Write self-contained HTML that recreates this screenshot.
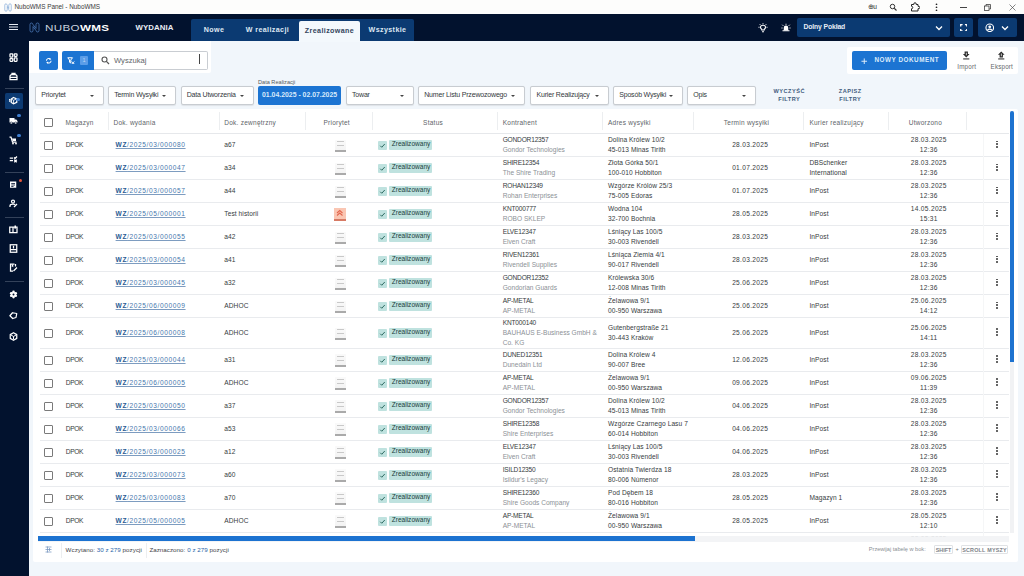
<!DOCTYPE html>
<html><head><meta charset="utf-8"><style>
*{margin:0;padding:0;box-sizing:border-box}
html,body{width:1024px;height:576px;overflow:hidden;background:#f1f6fb;font-family:"Liberation Sans",sans-serif;position:relative}
.abs{position:absolute}
svg{display:block}
#title{position:absolute;left:0;top:0;width:1024px;height:14px;background:#fdfdfc}
#title .tt{position:absolute;left:14.5px;top:3.2px;font-size:6.4px;line-height:8px;color:#3a3a3a;letter-spacing:0}
#hdr{position:absolute;left:0;top:14px;width:1024px;height:27.4px;background:#02122e}
#side{position:absolute;left:0;top:41px;width:29px;height:535px;background:#02122e}
.sico{position:absolute;left:9.1px}
.sact{position:absolute;left:4.8px;width:18.7px;height:16px;background:#0c3a72;border-radius:1.5px}
.sdot{position:absolute;width:3.8px;height:3.8px;border-radius:50%}
.ssep{position:absolute;left:5px;width:19px;height:1px;background:#34425a}
.tabs{position:absolute;left:190.5px;top:19px;width:223.5px;height:22.4px;background:#0b3a72;border-radius:2px 2px 0 0}
.tab{position:absolute;top:0;height:23px;font-size:7.1px;font-weight:bold;color:#dfe8f3;line-height:22px;text-align:center;letter-spacing:0.4px}
.tab.act{top:2px;height:21px;background:#f3f8fc;color:#34455c;line-height:20px;border-radius:2px 2px 0 0}
.t{position:absolute;white-space:nowrap;font-size:6.6px;line-height:10px;transform:translateY(-50%)}
.c1{color:#363b40;letter-spacing:0.08px}
.nar{letter-spacing:-0.35px}
.nar2{letter-spacing:-0.2px}
.dt{letter-spacing:0.3px}
.c2{color:#8c9196}
.lnk{color:#4677ad;text-decoration:underline;text-decoration-color:#7d9cc0;text-decoration-thickness:0.7px;text-underline-offset:0.5px;letter-spacing:0.6px}
.lnk b{font-weight:bold;color:#2a5a92}
.ctr{text-align:center}
.sep{position:absolute;left:39.5px;width:969.2px;height:1px;background:#e9ebee}
.cb{position:absolute;width:9px;height:9px;border:1.1px solid #7a7a7a;border-radius:1px;background:#fff}
.pril{position:absolute;width:11.5px;height:12.4px;background:linear-gradient(#fafafa,#f2f2f2)}
.pril i{position:absolute;left:2px;width:7.5px;height:0.9px;background:#c9c9c9}
.pril b{position:absolute;left:0;top:10.8px;width:11.5px;height:1.6px;background:#aaaaaa}
.prih{position:absolute;width:11.5px;height:12.8px;background:#fac6b3}
.prih svg{position:absolute;left:0;top:0.5px}
.prih:after{content:"";position:absolute;left:0;bottom:0;width:11.5px;height:1.8px;background:#d77a64}
.chk{position:absolute;width:8.8px;height:9px;background:#bfe2df;border-radius:1px}
.chk svg{position:absolute;left:0;top:0}
.chip{position:absolute;height:9.6px;width:43.4px;padding:0 0 0 2.6px;background:#bfe2df;color:#1a3e3a;font-size:6.5px;line-height:7.8px;border-radius:1px;letter-spacing:0.03px;white-space:nowrap}
.keb{position:absolute;width:2px;height:9px}
.keb i{display:block;width:1.6px;height:1.6px;background:#474747;border-radius:50%;margin-bottom:1.35px}
.hd{position:absolute;top:121.8px;transform:translateY(-50%);font-size:6.5px;color:#606469;white-space:nowrap;letter-spacing:0.25px}
.hsep{position:absolute;top:112px;width:1px;height:18px;background:#eceef0}
.fbox{position:absolute;top:85.5px;height:19.2px;background:#fff;border:1px solid #c8ccd1;border-radius:2px;box-shadow:0 0.5px 1px rgba(0,0,0,0.08)}
.fbox span{position:absolute;left:5.2px;top:7.9px;transform:translateY(-50%);font-size:7px;color:#33383d;white-space:nowrap;letter-spacing:-0.18px}
.fbox i{position:absolute;right:9px;top:8.3px;width:0;height:0;border-left:2.8px solid transparent;border-right:2.8px solid transparent;border-top:2.8px solid #444}
</style></head><body>
<div id="title">
 <svg class="abs" style="left:3.8px;top:2.8px" width="8" height="9" viewBox="0 0 16 18"><path d="M4 1.5 Q1.5 1.5 1.5 4.5 V13.5 Q1.5 16.5 4 16.5 Q6.5 16.5 6.5 13.5 V7 L9.5 13.5 Q10.5 16.5 12 16.5 Q14.5 16.5 14.5 13.5 V4.5 Q14.5 1.5 12 1.5 Q9.5 1.5 9.5 4.5 V11 L6.5 4.5 Q5.5 1.5 4 1.5 Z" stroke="#86acd8" stroke-width="1.4" fill="none"/></svg>
 <div class="tt">NuboWMS Panel - NuboWMS</div>
 <div class="abs" style="left:867.5px;top:3.2px;font-size:6.6px;line-height:8px;color:#333;letter-spacing:-0.3px">⊕u</div>
 <svg class="abs" style="left:889px;top:3px" width="9" height="9" viewBox="0 0 18 18"><circle cx="7" cy="7" r="4.5" stroke="#333" stroke-width="2" fill="none"/><path d="M10.5 10.5 L15 15" stroke="#333" stroke-width="2.2"/></svg>
 <svg class="abs" style="left:910px;top:2.2px" width="10" height="10" viewBox="0 0 20 20"><path d="M3 5 H7.5 Q7 1.5 10 1.5 Q13 1.5 12.5 5 H16 V8.5 Q19.5 8 19.5 11 Q19.5 14 16 13.5 V18 H3 V13.5 Q5.5 13.5 5.5 11 Q5.5 8.5 3 8.5 Z" stroke="#222" stroke-width="2" fill="none" stroke-linejoin="round"/></svg>
 <svg class="abs" style="left:934.8px;top:3px" width="3" height="9" viewBox="0 0 6 18"><circle cx="3" cy="2.5" r="1.7" fill="#222"/><circle cx="3" cy="8.5" r="1.7" fill="#222"/><circle cx="3" cy="14.5" r="1.7" fill="#222"/></svg>
 <div class="abs" style="left:959.6px;top:6.6px;width:7px;height:0.8px;background:#444"></div>
 <svg class="abs" style="left:984px;top:3.5px" width="7" height="7" viewBox="0 0 14 14"><rect x="1" y="4" width="9" height="9" stroke="#333" stroke-width="1.5" fill="none"/><path d="M4 4 V1 H13 V10 H10" stroke="#333" stroke-width="1.5" fill="none"/></svg>
 <svg class="abs" style="left:1008.5px;top:3.5px" width="7" height="7" viewBox="0 0 14 14"><path d="M1 1 L13 13 M13 1 L1 13" stroke="#444" stroke-width="1.3"/></svg>
</div>
<div id="hdr">
 <div class="abs" style="left:9px;top:10px;width:9.3px;height:1.1px;background:#e8edf5;box-shadow:0 2.5px 0 #e8edf5,0 5px 0 #e8edf5"></div>
 <svg class="abs" style="left:28.5px;top:8px" width="11" height="11" viewBox="0 0 22 22"><path d="M5 2 Q2 2 2 5 V17 Q2 20 5 20 Q8 20 8 17 V9 L14 17 Q15 20 17 20 Q20 20 20 17 V5 Q20 2 17 2 Q14 2 14 5 V13 L8 5 Q7 2 5 2 Z" stroke="#4f7fc0" stroke-width="1.5" fill="none"/></svg>
 <div class="abs" style="left:45px;top:8.5px;font-size:8.3px;line-height:10px;color:#c9d2de;letter-spacing:0.25px;white-space:nowrap;transform:scaleX(1.4);transform-origin:0 0">NUBO<b style="color:#fff">WMS</b></div>
 <div class="abs" style="left:135.5px;top:9px;font-size:7.8px;line-height:9px;color:#e9eef5;font-weight:bold;letter-spacing:0.1px">WYDANIA</div>
</div>
<div class="tabs">
 <div class="tab" style="left:0;width:47px">Nowe</div>
 <div class="tab" style="left:46px;width:62px">W realizacji</div>
 <div class="tab act" style="left:108.5px;width:61px">Zrealizowane</div>
 <div class="tab" style="left:170px;width:54px">Wszystkie</div>
</div>
<div class="abs" style="left:757.5px;top:22.5px;width:10px;height:10px"><svg width="10" height="10" viewBox="0 0 20 20"><path d="M7.5 14 V12.5 Q5 11 5 8.5 Q5 4.5 10 4.5 Q15 4.5 15 8.5 Q15 11 12.5 12.5 V14 Z" stroke="#fff" stroke-width="2.2" fill="none"/><path d="M8 17.5 H12 M10 0.5 V2.5 M3.5 2.5 L5 4 M16.5 2.5 L15 4 M1 8.5 H3 M17 8.5 H19" stroke="#fff" stroke-width="2"/></svg></div>
<div class="abs" style="left:780.5px;top:22.5px;width:10px;height:10px"><svg width="10" height="10" viewBox="0 0 20 20"><path d="M5.5 15 V9.5 Q5.5 5 10 5 Q14.5 5 14.5 9.5 V15 Z" fill="#fff"/><path d="M3 15.5 H17 M10 1.5 V3.5 M2.5 3.5 L4.5 5.5 M17.5 3.5 L15.5 5.5 M1 10 H3 M17 10 H19" stroke="#fff" stroke-width="2"/></svg></div>
<div class="abs" style="left:797px;top:18px;width:153px;height:19px;background:#0b3a72;border-radius:2px">
 <div class="abs" style="left:6.5px;top:5.2px;font-size:6.8px;font-weight:bold;color:#e6edf6;white-space:nowrap;letter-spacing:-0.12px">Dolny Pokład</div>
 <svg class="abs" style="left:138px;top:6.5px" width="8" height="6" viewBox="0 0 16 12"><path d="M2 3 L8 9 L14 3" stroke="#fff" stroke-width="2.6" fill="none"/></svg>
</div>
<div class="abs" style="left:954px;top:18px;width:19px;height:19px;background:#0b3a72;border-radius:2px">
 <svg class="abs" style="left:5.8px;top:5.8px" width="7.5" height="7.5" viewBox="0 0 16 16"><path d="M1.5 5.5 V1.5 H5.5 M10.5 1.5 H14.5 V5.5 M14.5 10.5 V14.5 H10.5 M5.5 14.5 H1.5 V10.5" stroke="#fff" stroke-width="2.8" fill="none"/></svg>
</div>
<div class="abs" style="left:978px;top:18px;width:39px;height:19px;background:#0b3a72;border-radius:2px">
 <svg class="abs" style="left:6.8px;top:4.8px" width="9.5" height="9.5" viewBox="0 0 20 20"><circle cx="10" cy="10" r="8" stroke="#fff" stroke-width="2.3" fill="none"/><circle cx="10" cy="8" r="3" fill="#fff"/><path d="M4.5 15.5 Q10 10.5 15.5 15.5" stroke="#fff" stroke-width="2.3" fill="none"/></svg>
 <svg class="abs" style="left:23px;top:6.5px" width="8" height="6" viewBox="0 0 16 12"><path d="M2 3 L8 9 L14 3" stroke="#fff" stroke-width="2.6" fill="none"/></svg>
</div>
<div id="side"><div class="ssep" style="top:47.3px"></div><div class="ssep" style="top:130.8px"></div><div class="ssep" style="top:175.6px"></div><div class="ssep" style="top:240.0px"></div></div>
<svg class="sico" style="top:52.5px" width="9" height="9" viewBox="0 0 18 18"><rect x="2" y="1.5" width="5.5" height="6.5" rx="1" stroke="#fff" fill="none" stroke-width="2.5"/><rect x="10.5" y="1.5" width="5.5" height="5" rx="1" stroke="#fff" fill="none" stroke-width="2.5"/><rect x="2" y="11" width="5.5" height="5.5" rx="1" stroke="#fff" fill="none" stroke-width="2.5"/><rect x="10.5" y="9.5" width="5.5" height="7" rx="1" stroke="#fff" fill="none" stroke-width="2.5"/></svg><svg class="sico" style="top:72.0px" width="9" height="9" viewBox="0 0 18 18"><path d="M2 9 Q2 5 6 5 H12 Q16 5 16 9 V15 H2 Z" stroke="#fff" fill="none" stroke-width="2.5"/><path d="M6 5 V2.5 H12 V5 M2 10.5 H16" stroke="#fff" fill="none" stroke-width="2.5"/></svg><div class="sact" style="top:92.8px"></div><svg class="sico" style="top:96.3px" width="9" height="9" viewBox="0 0 18 18"><path d="M9 3 L15.5 6 V12.5 L9 15.5 L4.5 13 V6 Z" stroke="#fff" fill="none" stroke-width="2.5"/><path d="M4.5 6 L9 8.5 L15.5 6 M9 8.5 V15.5" stroke="#fff" stroke-width="1.6" fill="none"/><path d="M0 7 H3 M0 10 H3" stroke="#fff" fill="none" stroke-width="2.5"/></svg><div class="sdot" style="left:16.4px;top:97.5px;background:#3f7fd0"></div><svg class="sico" style="top:115.8px" width="9" height="9" viewBox="0 0 18 18"><path d="M1 4 H11 V13 H1 Z M11 7 H14.5 L17 10 V13 H11 Z" fill="#fff"/><circle cx="4.5" cy="14" r="2.2" fill="#fff" stroke="#02122f" stroke-width="1"/><circle cx="13.5" cy="14" r="2.2" fill="#fff" stroke="#02122f" stroke-width="1"/></svg><div class="sdot" style="left:16.9px;top:113.5px;background:#3f7fd0"></div><svg class="sico" style="top:136.0px" width="9" height="9" viewBox="0 0 18 18"><path d="M1 2 H4 L7 12 H15" stroke="#fff" fill="none" stroke-width="2.5"/><path d="M6 5 H14 V10 H7.5 Z" fill="#fff"/><circle cx="8" cy="15" r="1.8" fill="#fff"/><circle cx="14" cy="15" r="1.8" fill="#fff"/></svg><div class="sdot" style="left:16.9px;top:133.7px;background:#3f7fd0"></div><svg class="sico" style="top:154.8px" width="9" height="9" viewBox="0 0 18 18"><path d="M1.5 6 H8 M1.5 11 H8 M10 5 L12 7 L16 3 M10.5 9.5 L15.5 14.5 M15.5 9.5 L10.5 14.5" stroke="#fff" fill="none" stroke-width="2.5"/></svg><svg class="sico" style="top:179.8px" width="9" height="9" viewBox="0 0 18 18"><rect x="2" y="3" width="12.5" height="12.5" fill="#fff"/><path d="M4.5 7 H12 M4.5 10 H12 M4.5 13 H9" stroke="#02122e" stroke-width="1.6"/></svg><div class="sdot" style="left:18.7px;top:178.5px;background:#e3573c"></div><svg class="sico" style="top:199.3px" width="9" height="9" viewBox="0 0 18 18"><circle cx="8" cy="5" r="3" stroke="#fff" fill="none" stroke-width="2.5"/><path d="M2 16 V13.5 Q2 10 8 10 Q11 10 12.5 11" stroke="#fff" fill="none" stroke-width="2.5"/><path d="M10 16 L16 10" stroke="#fff" stroke-width="2.4"/></svg><svg class="sico" style="top:224.9px" width="9" height="9" viewBox="0 0 18 18"><path d="M1.5 4 H8 V15 H1.5 Z M8 4 H16 V15 H8" stroke="#fff" fill="none" stroke-width="2.5"/><path d="M11 1 V8 L12.5 6.5 L14 8 V1 Z" fill="#fff"/></svg><svg class="sico" style="top:243.9px" width="9" height="9" viewBox="0 0 18 18"><rect x="2.5" y="1.5" width="13" height="15" stroke="#fff" fill="none" stroke-width="2.5"/><path d="M2.5 11 H15.5 M9 3.5 V9" stroke="#fff" fill="none" stroke-width="2.5"/></svg><svg class="sico" style="top:263.4px" width="9" height="9" viewBox="0 0 18 18"><path d="M11 2 H3 V16 H8" stroke="#fff" fill="none" stroke-width="2.5"/><path d="M5.5 3 V8.5 L7 7.2 L8.5 8.5 V3" fill="#fff"/><path d="M13 2 V7 M9 16 L16 9" stroke="#fff" fill="none" stroke-width="2.5"/></svg><svg class="sico" style="top:289.9px" width="9" height="9" viewBox="0 0 18 18"><g fill="#fff"><circle cx="9" cy="3.8" r="2.6"/><circle cx="13.5" cy="6.4" r="2.6"/><circle cx="13.5" cy="11.6" r="2.6"/><circle cx="9" cy="14.2" r="2.6"/><circle cx="4.5" cy="11.6" r="2.6"/><circle cx="4.5" cy="6.4" r="2.6"/><circle cx="9" cy="9" r="5"/></g><circle cx="9" cy="9" r="2" fill="#02122e"/></svg><svg class="sico" style="top:311.2px" width="9" height="9" viewBox="0 0 18 18"><path d="M1.8 9.5 L7 3.5 L15.5 5 L14 13 L7.5 15 Z" stroke="#fff" fill="none" stroke-width="2.5" stroke-linejoin="round"/></svg><svg class="sico" style="top:331.7px" width="9" height="9" viewBox="0 0 18 18"><path d="M9 1.5 L15.5 5.2 V12.8 L9 16.5 L2.5 12.8 V5.2 Z" stroke="#fff" fill="none" stroke-width="2.5" stroke-linejoin="round"/><path d="M9 9 V15 M9 9 L14 6 M9 9 L4 6" stroke="#fff" stroke-width="2"/></svg>
<!-- toolbar left -->
<div class="abs" style="left:29px;top:41.4px;width:181.5px;height:32.1px;background:#fff;border-radius:0 0 2px 0"></div>
<div class="abs" style="left:38.5px;top:51.3px;width:19px;height:19px;background:#1c74d2;border-radius:2px">
 <svg class="abs" style="left:6px;top:5.7px" width="7.5" height="7.5" viewBox="0 0 16 16"><path d="M3 8 A5 5 0 0 1 11.5 4.5 M13 8 A5 5 0 0 1 4.5 11.5" stroke="#fff" stroke-width="2.2" fill="none"/><path d="M10 1.5 L13.5 5.5 L9 6 Z M6 14.5 L2.5 10.5 L7 10 Z" fill="#fff"/></svg>
</div>
<div class="abs" style="left:61.5px;top:51.3px;width:33px;height:19px;background:#1c74d2;border-radius:2px 0 0 2px">
 <svg class="abs" style="left:5.8px;top:5.3px" width="8" height="7.5" viewBox="0 0 16 15"><path d="M1.5 1.5 H11 L7.5 6 V12 L5 10.5 V6 Z" stroke="#fff" stroke-width="2" fill="none" stroke-linejoin="round"/><path d="M9.5 9 L14.5 14 M14.5 9 L9.5 14" stroke="#fff" stroke-width="2"/></svg>
 <div class="abs" style="left:18.4px;top:5.1px;width:8.5px;height:8.2px;background:#5b9de8;border-radius:1px;color:#b9d6f6;font-size:5.5px;line-height:8.2px;text-align:center">1</div>
</div>
<div class="abs" style="left:93.8px;top:51.3px;width:113.9px;height:19px;background:#fff;border:1px solid #c9cdd2;border-left:none;border-radius:0 2px 2px 0">
 <svg class="abs" style="left:7.4px;top:3.6px" width="9" height="9" viewBox="0 0 18 18"><circle cx="7" cy="7" r="5" stroke="#555" stroke-width="2.2" fill="none"/><path d="M10.8 10.8 L16 16" stroke="#555" stroke-width="2.5"/></svg>
 <div class="abs" style="left:20.2px;top:3.6px;font-size:7.6px;color:#606468">Wyszukaj</div>
 <div class="abs" style="left:105.2px;top:1.7px;width:1px;height:10px;background:#444"></div>
</div>
<!-- toolbar right -->
<div class="abs" style="left:847px;top:47.4px;width:171px;height:27px;background:#fff;border-radius:2px"></div>
<div class="abs" style="left:852.2px;top:51.3px;width:94.8px;height:18.6px;background:#1c74d2;border-radius:2px">
 <svg class="abs" style="left:9.3px;top:6.3px" width="6.5" height="6.5" viewBox="0 0 14 14"><path d="M7 1 V13 M1 7 H13" stroke="#e6f0fb" stroke-width="2"/></svg>
 <div class="abs" style="left:22.3px;top:5.2px;font-size:6.3px;line-height:8px;font-weight:bold;color:#dcecfc;letter-spacing:0.55px;white-space:nowrap">NOWY DOKUMENT</div>
</div>
<svg class="abs" style="left:962.3px;top:51px" width="8.5" height="8.5" viewBox="0 0 18 18"><path d="M5.5 1 H12.5 V6.5 H16 L9 13.5 L2 6.5 H5.5 Z" fill="#2a2a2a"/><path d="M8.2 3.5 H9.8 V9 H8.2 Z" fill="#fff"/><path d="M2.5 16.8 H15.5" stroke="#2a2a2a" stroke-width="2.2"/></svg>
<div class="abs" style="left:957.3px;top:63px;font-size:6.3px;color:#66696d;letter-spacing:0.15px">Import</div>
<svg class="abs" style="left:996.8px;top:51px" width="8.5" height="8.5" viewBox="0 0 18 18"><path d="M5.5 13.5 H12.5 V8 H16 L9 1 L2 8 H5.5 Z" fill="#2a2a2a"/><path d="M8.2 5.5 H9.8 V11 H8.2 Z" fill="#fff"/><path d="M2.5 16.8 H15.5" stroke="#2a2a2a" stroke-width="2.2"/></svg>
<div class="abs" style="left:990.6px;top:63px;font-size:6.3px;color:#66696d;letter-spacing:0.15px">Eksport</div>
<!-- filters -->
<div class="fbox" style="left:35px;width:68.6px"><span>Priorytet</span><i></i></div>
<div class="fbox" style="left:108px;width:68.4px"><span>Termin Wysyłki</span><i></i></div>
<div class="fbox" style="left:180.5px;width:73.1px"><span>Data Utworzenia</span><i></i></div>
<div class="abs" style="left:258px;top:79px;font-size:5.6px;color:#555a60;white-space:nowrap">Data Realizacji</div>
<div class="abs" style="left:258px;top:86px;width:83px;height:18.7px;background:#1c74d2;border-radius:2px"><div class="abs" style="left:4px;top:5.4px;font-size:6.9px;line-height:8px;color:#d8eafb;font-weight:bold;white-space:nowrap;letter-spacing:0">01.04.2025 - 02.07.2025</div></div>
<div class="fbox" style="left:345.8px;width:68.7px"><span>Towar</span><i></i></div>
<div class="fbox" style="left:418px;width:107.3px"><span>Numer Listu Przewozowego</span><i></i></div>
<div class="fbox" style="left:530.3px;width:78.7px"><span>Kurier Realizujący</span><i></i></div>
<div class="fbox" style="left:613px;width:69.5px"><span>Sposób Wysyłki</span><i></i></div>
<div class="fbox" style="left:687px;width:69.3px"><span>Opis</span><i></i></div>
<div class="abs" style="left:768.3px;top:88.2px;width:42px;text-align:center;font-size:5.6px;line-height:7.4px;font-weight:bold;color:#3f5b7d;letter-spacing:0.5px">WYCZYŚĆ<br>FILTRY</div>
<div class="abs" style="left:829.3px;top:88.2px;width:42px;text-align:center;font-size:5.6px;line-height:7.4px;font-weight:bold;color:#3f5b7d;letter-spacing:0.5px">ZAPISZ<br>FILTRY</div>
<!-- table card -->
<div class="abs" style="left:33px;top:108.6px;width:984.5px;height:453.8px;background:#fff;border-radius:2px;overflow:hidden">
</div>
<div class="abs" style="left:0;top:0;width:1024px;height:536.5px;overflow:hidden">
<div class="sep" style="top:155.70px"></div><div class="cb" style="left:44px;top:140.70px"></div><div class="t c1 nar" style="left:65.80px;top:145.20px;">DPOK</div><div class="t lnk" style="left:115.60px;top:145.20px;"><b>WZ</b>/2025/03/000080</div><div class="t c1" style="left:224.30px;top:145.20px;">a67</div><div class="pril" style="left:334.6px;top:139.60px"><i style="top:1.9px"></i><i style="top:5.3px"></i><b></b></div><div class="chk" style="left:377.9px;top:140.70px"><svg width="9" height="9" viewBox="0 0 18 18"><path d="M4.5 9.5 L7.5 12.5 L13.5 6" stroke="#2e6b62" stroke-width="2" fill="none"/></svg></div><div class="chip" style="left:389.1px;top:140.40px">Zrealizowany</div><div class="t c1 nar2" style="left:502.70px;top:140.15px;">GONDOR12357</div><div class="t c2" style="left:502.70px;top:150.25px;">Gondor Technologies</div><div class="t c1" style="left:608.00px;top:140.15px;">Dolina Królew 10/2</div><div class="t c1" style="left:608.00px;top:150.25px;">45-013 Minas Tirith</div><div class="t c1 ctr dt" style="left:695px;width:110.3px;top:145.20px">28.03.2025</div><div class="t c1" style="left:809.40px;top:145.20px;">InPost</div><div class="t c1 ctr dt" style="left:889.8px;width:78px;top:140.15px">28.03.2025</div><div class="t c1 ctr dt" style="left:889.8px;width:78px;top:150.25px">12:36</div><div class="keb" style="left:996.2px;top:140.50px"><i></i><i></i><i></i></div>
<div class="sep" style="top:178.70px"></div><div class="cb" style="left:44px;top:163.70px"></div><div class="t c1 nar" style="left:65.80px;top:168.20px;">DPOK</div><div class="t lnk" style="left:115.60px;top:168.20px;"><b>WZ</b>/2025/03/000047</div><div class="t c1" style="left:224.30px;top:168.20px;">a34</div><div class="pril" style="left:334.6px;top:162.60px"><i style="top:1.9px"></i><i style="top:5.3px"></i><b></b></div><div class="chk" style="left:377.9px;top:163.70px"><svg width="9" height="9" viewBox="0 0 18 18"><path d="M4.5 9.5 L7.5 12.5 L13.5 6" stroke="#2e6b62" stroke-width="2" fill="none"/></svg></div><div class="chip" style="left:389.1px;top:163.40px">Zrealizowany</div><div class="t c1 nar2" style="left:502.70px;top:163.15px;">SHIRE12354</div><div class="t c2" style="left:502.70px;top:173.25px;">The Shire Trading</div><div class="t c1" style="left:608.00px;top:163.15px;">Złota Górka 50/1</div><div class="t c1" style="left:608.00px;top:173.25px;">100-010 Hobbiton</div><div class="t c1 ctr dt" style="left:695px;width:110.3px;top:168.20px">01.07.2025</div><div class="t c1" style="left:809.40px;top:163.15px;">DBSchenker</div><div class="t c1" style="left:809.40px;top:173.25px;">International</div><div class="t c1 ctr dt" style="left:889.8px;width:78px;top:163.15px">28.03.2025</div><div class="t c1 ctr dt" style="left:889.8px;width:78px;top:173.25px">12:36</div><div class="keb" style="left:996.2px;top:163.50px"><i></i><i></i><i></i></div>
<div class="sep" style="top:201.70px"></div><div class="cb" style="left:44px;top:186.70px"></div><div class="t c1 nar" style="left:65.80px;top:191.20px;">DPOK</div><div class="t lnk" style="left:115.60px;top:191.20px;"><b>WZ</b>/2025/03/000057</div><div class="t c1" style="left:224.30px;top:191.20px;">a44</div><div class="pril" style="left:334.6px;top:185.60px"><i style="top:1.9px"></i><i style="top:5.3px"></i><b></b></div><div class="chk" style="left:377.9px;top:186.70px"><svg width="9" height="9" viewBox="0 0 18 18"><path d="M4.5 9.5 L7.5 12.5 L13.5 6" stroke="#2e6b62" stroke-width="2" fill="none"/></svg></div><div class="chip" style="left:389.1px;top:186.40px">Zrealizowany</div><div class="t c1 nar2" style="left:502.70px;top:186.15px;">ROHAN12349</div><div class="t c2" style="left:502.70px;top:196.25px;">Rohan Enterprises</div><div class="t c1" style="left:608.00px;top:186.15px;">Wzgórze Królów 25/3</div><div class="t c1" style="left:608.00px;top:196.25px;">75-005 Edoras</div><div class="t c1 ctr dt" style="left:695px;width:110.3px;top:191.20px">01.07.2025</div><div class="t c1" style="left:809.40px;top:191.20px;">InPost</div><div class="t c1 ctr dt" style="left:889.8px;width:78px;top:186.15px">28.03.2025</div><div class="t c1 ctr dt" style="left:889.8px;width:78px;top:196.25px">12:36</div><div class="keb" style="left:996.2px;top:186.50px"><i></i><i></i><i></i></div>
<div class="sep" style="top:224.70px"></div><div class="cb" style="left:44px;top:209.70px"></div><div class="t c1 nar" style="left:65.80px;top:214.20px;">DPOK</div><div class="t lnk" style="left:115.60px;top:214.20px;"><b>WZ</b>/2025/05/000001</div><div class="t c1" style="left:224.30px;top:214.20px;">Test historii</div><div class="prih" style="left:334.3px;top:207.80px"><svg width="11.5" height="11" viewBox="0 0 23 22"><path d="M6 10 L11.5 5 L17 10 M6 15 L11.5 10 L17 15" stroke="#e2654c" stroke-width="2.1" fill="none"/></svg></div><div class="chk" style="left:377.9px;top:209.70px"><svg width="9" height="9" viewBox="0 0 18 18"><path d="M4.5 9.5 L7.5 12.5 L13.5 6" stroke="#2e6b62" stroke-width="2" fill="none"/></svg></div><div class="chip" style="left:389.1px;top:209.40px">Zrealizowany</div><div class="t c1 nar2" style="left:502.70px;top:209.15px;">KNT000777</div><div class="t c2" style="left:502.70px;top:219.25px;">ROBO SKLEP</div><div class="t c1" style="left:608.00px;top:209.15px;">Wodna 104</div><div class="t c1" style="left:608.00px;top:219.25px;">32-700 Bochnia</div><div class="t c1 ctr dt" style="left:695px;width:110.3px;top:214.20px">28.05.2025</div><div class="t c1" style="left:809.40px;top:214.20px;">InPost</div><div class="t c1 ctr dt" style="left:889.8px;width:78px;top:209.15px">14.05.2025</div><div class="t c1 ctr dt" style="left:889.8px;width:78px;top:219.25px">15:31</div><div class="keb" style="left:996.2px;top:209.50px"><i></i><i></i><i></i></div>
<div class="sep" style="top:247.70px"></div><div class="cb" style="left:44px;top:232.70px"></div><div class="t c1 nar" style="left:65.80px;top:237.20px;">DPOK</div><div class="t lnk" style="left:115.60px;top:237.20px;"><b>WZ</b>/2025/03/000055</div><div class="t c1" style="left:224.30px;top:237.20px;">a42</div><div class="pril" style="left:334.6px;top:231.60px"><i style="top:1.9px"></i><i style="top:5.3px"></i><b></b></div><div class="chk" style="left:377.9px;top:232.70px"><svg width="9" height="9" viewBox="0 0 18 18"><path d="M4.5 9.5 L7.5 12.5 L13.5 6" stroke="#2e6b62" stroke-width="2" fill="none"/></svg></div><div class="chip" style="left:389.1px;top:232.40px">Zrealizowany</div><div class="t c1 nar2" style="left:502.70px;top:232.15px;">ELVE12347</div><div class="t c2" style="left:502.70px;top:242.25px;">Elven Craft</div><div class="t c1" style="left:608.00px;top:232.15px;">Lśniący Las 100/5</div><div class="t c1" style="left:608.00px;top:242.25px;">30-003 Rivendell</div><div class="t c1 ctr dt" style="left:695px;width:110.3px;top:237.20px">28.03.2025</div><div class="t c1" style="left:809.40px;top:237.20px;">InPost</div><div class="t c1 ctr dt" style="left:889.8px;width:78px;top:232.15px">28.03.2025</div><div class="t c1 ctr dt" style="left:889.8px;width:78px;top:242.25px">12:36</div><div class="keb" style="left:996.2px;top:232.50px"><i></i><i></i><i></i></div>
<div class="sep" style="top:270.70px"></div><div class="cb" style="left:44px;top:255.70px"></div><div class="t c1 nar" style="left:65.80px;top:260.20px;">DPOK</div><div class="t lnk" style="left:115.60px;top:260.20px;"><b>WZ</b>/2025/03/000054</div><div class="t c1" style="left:224.30px;top:260.20px;">a41</div><div class="pril" style="left:334.6px;top:254.60px"><i style="top:1.9px"></i><i style="top:5.3px"></i><b></b></div><div class="chk" style="left:377.9px;top:255.70px"><svg width="9" height="9" viewBox="0 0 18 18"><path d="M4.5 9.5 L7.5 12.5 L13.5 6" stroke="#2e6b62" stroke-width="2" fill="none"/></svg></div><div class="chip" style="left:389.1px;top:255.40px">Zrealizowany</div><div class="t c1 nar2" style="left:502.70px;top:255.15px;">RIVEN12361</div><div class="t c2" style="left:502.70px;top:265.25px;">Rivendell Supplies</div><div class="t c1" style="left:608.00px;top:255.15px;">Lśniąca Ziemia 4/1</div><div class="t c1" style="left:608.00px;top:265.25px;">90-017 Rivendell</div><div class="t c1 ctr dt" style="left:695px;width:110.3px;top:260.20px">28.03.2025</div><div class="t c1" style="left:809.40px;top:260.20px;">InPost</div><div class="t c1 ctr dt" style="left:889.8px;width:78px;top:255.15px">28.03.2025</div><div class="t c1 ctr dt" style="left:889.8px;width:78px;top:265.25px">12:36</div><div class="keb" style="left:996.2px;top:255.50px"><i></i><i></i><i></i></div>
<div class="sep" style="top:293.70px"></div><div class="cb" style="left:44px;top:278.70px"></div><div class="t c1 nar" style="left:65.80px;top:283.20px;">DPOK</div><div class="t lnk" style="left:115.60px;top:283.20px;"><b>WZ</b>/2025/03/000045</div><div class="t c1" style="left:224.30px;top:283.20px;">a32</div><div class="pril" style="left:334.6px;top:277.60px"><i style="top:1.9px"></i><i style="top:5.3px"></i><b></b></div><div class="chk" style="left:377.9px;top:278.70px"><svg width="9" height="9" viewBox="0 0 18 18"><path d="M4.5 9.5 L7.5 12.5 L13.5 6" stroke="#2e6b62" stroke-width="2" fill="none"/></svg></div><div class="chip" style="left:389.1px;top:278.40px">Zrealizowany</div><div class="t c1 nar2" style="left:502.70px;top:278.15px;">GONDOR12352</div><div class="t c2" style="left:502.70px;top:288.25px;">Gondorian Guards</div><div class="t c1" style="left:608.00px;top:278.15px;">Królewska 30/6</div><div class="t c1" style="left:608.00px;top:288.25px;">12-008 Minas Tirith</div><div class="t c1 ctr dt" style="left:695px;width:110.3px;top:283.20px">25.06.2025</div><div class="t c1" style="left:809.40px;top:283.20px;">InPost</div><div class="t c1 ctr dt" style="left:889.8px;width:78px;top:278.15px">28.03.2025</div><div class="t c1 ctr dt" style="left:889.8px;width:78px;top:288.25px">12:36</div><div class="keb" style="left:996.2px;top:278.50px"><i></i><i></i><i></i></div>
<div class="sep" style="top:316.70px"></div><div class="cb" style="left:44px;top:301.70px"></div><div class="t c1 nar" style="left:65.80px;top:306.20px;">DPOK</div><div class="t lnk" style="left:115.60px;top:306.20px;"><b>WZ</b>/2025/06/000009</div><div class="t c1" style="left:224.30px;top:306.20px;">ADHOC</div><div class="pril" style="left:334.6px;top:300.60px"><i style="top:1.9px"></i><i style="top:5.3px"></i><b></b></div><div class="chk" style="left:377.9px;top:301.70px"><svg width="9" height="9" viewBox="0 0 18 18"><path d="M4.5 9.5 L7.5 12.5 L13.5 6" stroke="#2e6b62" stroke-width="2" fill="none"/></svg></div><div class="chip" style="left:389.1px;top:301.40px">Zrealizowany</div><div class="t c1 nar2" style="left:502.70px;top:301.15px;">AP-METAL</div><div class="t c2" style="left:502.70px;top:311.25px;">AP-METAL</div><div class="t c1" style="left:608.00px;top:301.15px;">Żelawowa 9/1</div><div class="t c1" style="left:608.00px;top:311.25px;">00-950 Warszawa</div><div class="t c1 ctr dt" style="left:695px;width:110.3px;top:306.20px">25.06.2025</div><div class="t c1" style="left:809.40px;top:306.20px;">InPost</div><div class="t c1 ctr dt" style="left:889.8px;width:78px;top:301.15px">25.06.2025</div><div class="t c1 ctr dt" style="left:889.8px;width:78px;top:311.25px">14:12</div><div class="keb" style="left:996.2px;top:301.50px"><i></i><i></i><i></i></div>
<div class="sep" style="top:347.50px"></div><div class="cb" style="left:44px;top:328.60px"></div><div class="t c1 nar" style="left:65.80px;top:333.10px;">DPOK</div><div class="t lnk" style="left:115.60px;top:333.10px;"><b>WZ</b>/2025/06/000008</div><div class="t c1" style="left:224.30px;top:333.10px;">ADHOC</div><div class="pril" style="left:334.6px;top:327.50px"><i style="top:1.9px"></i><i style="top:5.3px"></i><b></b></div><div class="chk" style="left:377.9px;top:328.60px"><svg width="9" height="9" viewBox="0 0 18 18"><path d="M4.5 9.5 L7.5 12.5 L13.5 6" stroke="#2e6b62" stroke-width="2" fill="none"/></svg></div><div class="chip" style="left:389.1px;top:328.30px">Zrealizowany</div><div class="t c1 nar2" style="left:502.70px;top:323.00px;">KNT000140</div><div class="t c2" style="left:502.70px;top:333.10px;">BAUHAUS E-Business GmbH &amp;</div><div class="t c2" style="left:502.70px;top:343.20px;">Co. KG</div><div class="t c1" style="left:608.00px;top:328.05px;">Gutenbergstraße 21</div><div class="t c1" style="left:608.00px;top:338.15px;">30-443 Kraków</div><div class="t c1 ctr dt" style="left:695px;width:110.3px;top:333.10px">25.06.2025</div><div class="t c1" style="left:809.40px;top:333.10px;">InPost</div><div class="t c1 ctr dt" style="left:889.8px;width:78px;top:328.05px">25.06.2025</div><div class="t c1 ctr dt" style="left:889.8px;width:78px;top:338.15px">14:11</div><div class="keb" style="left:996.2px;top:328.40px"><i></i><i></i><i></i></div>
<div class="sep" style="top:370.50px"></div><div class="cb" style="left:44px;top:355.50px"></div><div class="t c1 nar" style="left:65.80px;top:360.00px;">DPOK</div><div class="t lnk" style="left:115.60px;top:360.00px;"><b>WZ</b>/2025/03/000044</div><div class="t c1" style="left:224.30px;top:360.00px;">a31</div><div class="pril" style="left:334.6px;top:354.40px"><i style="top:1.9px"></i><i style="top:5.3px"></i><b></b></div><div class="chk" style="left:377.9px;top:355.50px"><svg width="9" height="9" viewBox="0 0 18 18"><path d="M4.5 9.5 L7.5 12.5 L13.5 6" stroke="#2e6b62" stroke-width="2" fill="none"/></svg></div><div class="chip" style="left:389.1px;top:355.20px">Zrealizowany</div><div class="t c1 nar2" style="left:502.70px;top:354.95px;">DUNED12351</div><div class="t c2" style="left:502.70px;top:365.05px;">Dunedain Ltd</div><div class="t c1" style="left:608.00px;top:354.95px;">Dolina Królew 4</div><div class="t c1" style="left:608.00px;top:365.05px;">90-007 Bree</div><div class="t c1 ctr dt" style="left:695px;width:110.3px;top:360.00px">12.06.2025</div><div class="t c1" style="left:809.40px;top:360.00px;">InPost</div><div class="t c1 ctr dt" style="left:889.8px;width:78px;top:354.95px">28.03.2025</div><div class="t c1 ctr dt" style="left:889.8px;width:78px;top:365.05px">12:36</div><div class="keb" style="left:996.2px;top:355.30px"><i></i><i></i><i></i></div>
<div class="sep" style="top:393.50px"></div><div class="cb" style="left:44px;top:378.50px"></div><div class="t c1 nar" style="left:65.80px;top:383.00px;">DPOK</div><div class="t lnk" style="left:115.60px;top:383.00px;"><b>WZ</b>/2025/06/000005</div><div class="t c1" style="left:224.30px;top:383.00px;">ADHOC</div><div class="pril" style="left:334.6px;top:377.40px"><i style="top:1.9px"></i><i style="top:5.3px"></i><b></b></div><div class="chk" style="left:377.9px;top:378.50px"><svg width="9" height="9" viewBox="0 0 18 18"><path d="M4.5 9.5 L7.5 12.5 L13.5 6" stroke="#2e6b62" stroke-width="2" fill="none"/></svg></div><div class="chip" style="left:389.1px;top:378.20px">Zrealizowany</div><div class="t c1 nar2" style="left:502.70px;top:377.95px;">AP-METAL</div><div class="t c2" style="left:502.70px;top:388.05px;">AP-METAL</div><div class="t c1" style="left:608.00px;top:377.95px;">Żelawowa 9/1</div><div class="t c1" style="left:608.00px;top:388.05px;">00-950 Warszawa</div><div class="t c1 ctr dt" style="left:695px;width:110.3px;top:383.00px">09.06.2025</div><div class="t c1" style="left:809.40px;top:383.00px;">InPost</div><div class="t c1 ctr dt" style="left:889.8px;width:78px;top:377.95px">09.06.2025</div><div class="t c1 ctr dt" style="left:889.8px;width:78px;top:388.05px">11:39</div><div class="keb" style="left:996.2px;top:378.30px"><i></i><i></i><i></i></div>
<div class="sep" style="top:416.50px"></div><div class="cb" style="left:44px;top:401.50px"></div><div class="t c1 nar" style="left:65.80px;top:406.00px;">DPOK</div><div class="t lnk" style="left:115.60px;top:406.00px;"><b>WZ</b>/2025/03/000050</div><div class="t c1" style="left:224.30px;top:406.00px;">a37</div><div class="pril" style="left:334.6px;top:400.40px"><i style="top:1.9px"></i><i style="top:5.3px"></i><b></b></div><div class="chk" style="left:377.9px;top:401.50px"><svg width="9" height="9" viewBox="0 0 18 18"><path d="M4.5 9.5 L7.5 12.5 L13.5 6" stroke="#2e6b62" stroke-width="2" fill="none"/></svg></div><div class="chip" style="left:389.1px;top:401.20px">Zrealizowany</div><div class="t c1 nar2" style="left:502.70px;top:400.95px;">GONDOR12357</div><div class="t c2" style="left:502.70px;top:411.05px;">Gondor Technologies</div><div class="t c1" style="left:608.00px;top:400.95px;">Dolina Królew 10/2</div><div class="t c1" style="left:608.00px;top:411.05px;">45-013 Minas Tirith</div><div class="t c1 ctr dt" style="left:695px;width:110.3px;top:406.00px">04.06.2025</div><div class="t c1" style="left:809.40px;top:406.00px;">InPost</div><div class="t c1 ctr dt" style="left:889.8px;width:78px;top:400.95px">28.03.2025</div><div class="t c1 ctr dt" style="left:889.8px;width:78px;top:411.05px">12:36</div><div class="keb" style="left:996.2px;top:401.30px"><i></i><i></i><i></i></div>
<div class="sep" style="top:439.50px"></div><div class="cb" style="left:44px;top:424.50px"></div><div class="t c1 nar" style="left:65.80px;top:429.00px;">DPOK</div><div class="t lnk" style="left:115.60px;top:429.00px;"><b>WZ</b>/2025/03/000066</div><div class="t c1" style="left:224.30px;top:429.00px;">a53</div><div class="pril" style="left:334.6px;top:423.40px"><i style="top:1.9px"></i><i style="top:5.3px"></i><b></b></div><div class="chk" style="left:377.9px;top:424.50px"><svg width="9" height="9" viewBox="0 0 18 18"><path d="M4.5 9.5 L7.5 12.5 L13.5 6" stroke="#2e6b62" stroke-width="2" fill="none"/></svg></div><div class="chip" style="left:389.1px;top:424.20px">Zrealizowany</div><div class="t c1 nar2" style="left:502.70px;top:423.95px;">SHIRE12358</div><div class="t c2" style="left:502.70px;top:434.05px;">Shire Enterprises</div><div class="t c1" style="left:608.00px;top:423.95px;">Wzgórze Czarnego Lasu 7</div><div class="t c1" style="left:608.00px;top:434.05px;">60-014 Hobbiton</div><div class="t c1 ctr dt" style="left:695px;width:110.3px;top:429.00px">04.06.2025</div><div class="t c1" style="left:809.40px;top:429.00px;">InPost</div><div class="t c1 ctr dt" style="left:889.8px;width:78px;top:423.95px">28.03.2025</div><div class="t c1 ctr dt" style="left:889.8px;width:78px;top:434.05px">12:36</div><div class="keb" style="left:996.2px;top:424.30px"><i></i><i></i><i></i></div>
<div class="sep" style="top:462.50px"></div><div class="cb" style="left:44px;top:447.50px"></div><div class="t c1 nar" style="left:65.80px;top:452.00px;">DPOK</div><div class="t lnk" style="left:115.60px;top:452.00px;"><b>WZ</b>/2025/03/000025</div><div class="t c1" style="left:224.30px;top:452.00px;">a12</div><div class="pril" style="left:334.6px;top:446.40px"><i style="top:1.9px"></i><i style="top:5.3px"></i><b></b></div><div class="chk" style="left:377.9px;top:447.50px"><svg width="9" height="9" viewBox="0 0 18 18"><path d="M4.5 9.5 L7.5 12.5 L13.5 6" stroke="#2e6b62" stroke-width="2" fill="none"/></svg></div><div class="chip" style="left:389.1px;top:447.20px">Zrealizowany</div><div class="t c1 nar2" style="left:502.70px;top:446.95px;">ELVE12347</div><div class="t c2" style="left:502.70px;top:457.05px;">Elven Craft</div><div class="t c1" style="left:608.00px;top:446.95px;">Lśniący Las 100/5</div><div class="t c1" style="left:608.00px;top:457.05px;">30-003 Rivendell</div><div class="t c1 ctr dt" style="left:695px;width:110.3px;top:452.00px">04.06.2025</div><div class="t c1" style="left:809.40px;top:452.00px;">InPost</div><div class="t c1 ctr dt" style="left:889.8px;width:78px;top:446.95px">28.03.2025</div><div class="t c1 ctr dt" style="left:889.8px;width:78px;top:457.05px">12:36</div><div class="keb" style="left:996.2px;top:447.30px"><i></i><i></i><i></i></div>
<div class="sep" style="top:485.50px"></div><div class="cb" style="left:44px;top:470.50px"></div><div class="t c1 nar" style="left:65.80px;top:475.00px;">DPOK</div><div class="t lnk" style="left:115.60px;top:475.00px;"><b>WZ</b>/2025/03/000073</div><div class="t c1" style="left:224.30px;top:475.00px;">a60</div><div class="pril" style="left:334.6px;top:469.40px"><i style="top:1.9px"></i><i style="top:5.3px"></i><b></b></div><div class="chk" style="left:377.9px;top:470.50px"><svg width="9" height="9" viewBox="0 0 18 18"><path d="M4.5 9.5 L7.5 12.5 L13.5 6" stroke="#2e6b62" stroke-width="2" fill="none"/></svg></div><div class="chip" style="left:389.1px;top:470.20px">Zrealizowany</div><div class="t c1 nar2" style="left:502.70px;top:469.95px;">ISILD12350</div><div class="t c2" style="left:502.70px;top:480.05px;">Isildur's Legacy</div><div class="t c1" style="left:608.00px;top:469.95px;">Ostatnia Twierdza 18</div><div class="t c1" style="left:608.00px;top:480.05px;">80-006 Númenor</div><div class="t c1 ctr dt" style="left:695px;width:110.3px;top:475.00px">28.03.2025</div><div class="t c1" style="left:809.40px;top:475.00px;">InPost</div><div class="t c1 ctr dt" style="left:889.8px;width:78px;top:469.95px">28.03.2025</div><div class="t c1 ctr dt" style="left:889.8px;width:78px;top:480.05px">12:36</div><div class="keb" style="left:996.2px;top:470.30px"><i></i><i></i><i></i></div>
<div class="sep" style="top:508.50px"></div><div class="cb" style="left:44px;top:493.50px"></div><div class="t c1 nar" style="left:65.80px;top:498.00px;">DPOK</div><div class="t lnk" style="left:115.60px;top:498.00px;"><b>WZ</b>/2025/03/000083</div><div class="t c1" style="left:224.30px;top:498.00px;">a70</div><div class="pril" style="left:334.6px;top:492.40px"><i style="top:1.9px"></i><i style="top:5.3px"></i><b></b></div><div class="chk" style="left:377.9px;top:493.50px"><svg width="9" height="9" viewBox="0 0 18 18"><path d="M4.5 9.5 L7.5 12.5 L13.5 6" stroke="#2e6b62" stroke-width="2" fill="none"/></svg></div><div class="chip" style="left:389.1px;top:493.20px">Zrealizowany</div><div class="t c1 nar2" style="left:502.70px;top:492.95px;">SHIRE12360</div><div class="t c2" style="left:502.70px;top:503.05px;">Shire Goods Company</div><div class="t c1" style="left:608.00px;top:492.95px;">Pod Dębem 18</div><div class="t c1" style="left:608.00px;top:503.05px;">80-016 Hobbiton</div><div class="t c1 ctr dt" style="left:695px;width:110.3px;top:498.00px">28.05.2025</div><div class="t c1" style="left:809.40px;top:498.00px;">Magazyn 1</div><div class="t c1 ctr dt" style="left:889.8px;width:78px;top:492.95px">28.03.2025</div><div class="t c1 ctr dt" style="left:889.8px;width:78px;top:503.05px">12:36</div><div class="keb" style="left:996.2px;top:493.30px"><i></i><i></i><i></i></div>
<div class="sep" style="top:531.50px"></div><div class="cb" style="left:44px;top:516.50px"></div><div class="t c1 nar" style="left:65.80px;top:521.00px;">DPOK</div><div class="t lnk" style="left:115.60px;top:521.00px;"><b>WZ</b>/2025/05/000005</div><div class="t c1" style="left:224.30px;top:521.00px;">ADHOC</div><div class="pril" style="left:334.6px;top:515.40px"><i style="top:1.9px"></i><i style="top:5.3px"></i><b></b></div><div class="chk" style="left:377.9px;top:516.50px"><svg width="9" height="9" viewBox="0 0 18 18"><path d="M4.5 9.5 L7.5 12.5 L13.5 6" stroke="#2e6b62" stroke-width="2" fill="none"/></svg></div><div class="chip" style="left:389.1px;top:516.20px">Zrealizowany</div><div class="t c1 nar2" style="left:502.70px;top:515.95px;">AP-METAL</div><div class="t c2" style="left:502.70px;top:526.05px;">AP-METAL</div><div class="t c1" style="left:608.00px;top:515.95px;">Żelawowa 9/1</div><div class="t c1" style="left:608.00px;top:526.05px;">00-950 Warszawa</div><div class="t c1 ctr dt" style="left:695px;width:110.3px;top:521.00px">28.05.2025</div><div class="t c1" style="left:809.40px;top:521.00px;">InPost</div><div class="t c1 ctr dt" style="left:889.8px;width:78px;top:515.95px">28.05.2025</div><div class="t c1 ctr dt" style="left:889.8px;width:78px;top:526.05px">12:10</div><div class="keb" style="left:996.2px;top:516.30px"><i></i><i></i><i></i></div>
<div class="sep" style="top:554.50px"></div><div class="cb" style="left:44px;top:539.50px"></div><div class="t c1 nar" style="left:65.80px;top:544.00px;">DPOK</div><div class="t lnk" style="left:115.60px;top:544.00px;"><b>WZ</b>/2025/03/000081</div><div class="t c1" style="left:224.30px;top:544.00px;">a68</div><div class="pril" style="left:334.6px;top:538.40px"><i style="top:1.9px"></i><i style="top:5.3px"></i><b></b></div><div class="chk" style="left:377.9px;top:539.50px"><svg width="9" height="9" viewBox="0 0 18 18"><path d="M4.5 9.5 L7.5 12.5 L13.5 6" stroke="#2e6b62" stroke-width="2" fill="none"/></svg></div><div class="chip" style="left:389.1px;top:539.20px">Zrealizowany</div><div class="t c1 nar2" style="left:502.70px;top:538.95px;">GONDOR12357</div><div class="t c2" style="left:502.70px;top:549.05px;">Gondor Technologies</div><div class="t c1" style="left:608.00px;top:538.95px;">Dolina Królew 10/2</div><div class="t c1" style="left:608.00px;top:549.05px;">45-013 Minas Tirith</div><div class="t c1 ctr dt" style="left:695px;width:110.3px;top:544.00px">28.05.2025</div><div class="t c1" style="left:809.40px;top:544.00px;">InPost</div><div class="t c1 ctr dt" style="left:889.8px;width:78px;top:538.95px">28.03.2025</div><div class="t c1 ctr dt" style="left:889.8px;width:78px;top:549.05px">12:36</div><div class="keb" style="left:996.2px;top:539.30px"><i></i><i></i><i></i></div>
</div>
<!-- header -->
<div class="cb" style="left:44px;top:118.4px"></div>
<div class="hd" style="left:65.4px">Magazyn</div>
<div class="hd" style="left:113.5px">Dok. wydania</div>
<div class="hd" style="left:224.3px">Dok. zewnętrzny</div>
<div class="hd" style="left:303.1px;width:67.2px;text-align:center">Priorytet</div>
<div class="hd" style="left:370.8px;width:124.5px;text-align:center">Status</div>
<div class="hd" style="left:502.7px">Kontrahent</div>
<div class="hd" style="left:608px">Adres wysyłki</div>
<div class="hd" style="left:691.4px;width:110.3px;text-align:center">Termin wysyłki</div>
<div class="hd" style="left:809.4px">Kurier realizujący</div>
<div class="hd" style="left:886.4px;width:78px;text-align:center">Utworzono</div>
<div class="hsep" style="left:107.6px"></div>
<div class="hsep" style="left:218.5px"></div>
<div class="hsep" style="left:305.1px"></div>
<div class="hsep" style="left:372.3px"></div>
<div class="hsep" style="left:496.8px"></div>
<div class="hsep" style="left:602px"></div>
<div class="hsep" style="left:693px"></div>
<div class="hsep" style="left:803.3px"></div>
<div class="hsep" style="left:888.3px"></div>
<div class="hsep" style="left:966.3px"></div>
<div class="abs" style="left:39.5px;top:133.2px;width:969.2px;height:1px;background:#e6e8eb"></div>
<div class="abs" style="left:983.4px;top:134px;width:1px;height:402px;background:#f5f6f7"></div>
<!-- scrollbars -->
<div class="abs" style="left:1009.6px;top:111.2px;width:4.6px;height:422px;background:#f1f2f4"></div>
<div class="abs" style="left:1009.6px;top:111.2px;width:4.6px;height:251px;background:#1c72d0;border-radius:2.3px 2.3px 0 0"></div>
<div class="abs" style="left:38.3px;top:535.6px;width:970.4px;height:6px;background:rgba(242,243,245,0.9)"></div>
<div class="abs" style="left:38.3px;top:536px;width:656.6px;height:5px;background:#1c72d0"></div>
<!-- footer -->
<svg class="abs" style="left:45.3px;top:546px" width="7" height="7" viewBox="0 0 14 14"><path d="M1 2 H13 M1 7 H13 M1 12 H13 M5 1 V13 M9 4 V10" stroke="#6f8fbc" stroke-width="1.4" fill="none"/></svg>
<div class="abs" style="left:61.3px;top:543px;width:1px;height:15px;background:#eceef0"></div>
<div class="abs" style="left:145.7px;top:543px;width:1px;height:15px;background:#eceef0"></div>
<div class="abs" style="left:65.6px;top:545.5px;font-size:6.2px;color:#3f4449;white-space:nowrap;letter-spacing:0.05px">Wczytano: <span style="color:#2a64a8">30 z 279</span> pozycji</div>
<div class="abs" style="left:149.4px;top:545.5px;font-size:6.2px;color:#3f4449;white-space:nowrap;letter-spacing:0.05px">Zaznaczono: <span style="color:#2a64a8">0 z 279</span> pozycji</div>
<div class="abs" style="left:868.8px;top:545.8px;font-size:5.6px;color:#8a8f95;white-space:nowrap">Przewijaj tabelę w bok:</div>
<div class="abs" style="left:934px;top:544.5px;width:19px;height:9px;border:0.6px solid #e0e2e5;border-radius:1px;font-size:5.4px;line-height:8px;text-align:center;color:#7d8288;font-weight:bold">SHIFT</div>
<div class="abs" style="left:955.5px;top:545.5px;font-size:5.6px;color:#777">+</div>
<div class="abs" style="left:961px;top:544.5px;width:47px;height:9px;border:0.6px solid #e0e2e5;border-radius:1px;font-size:5.4px;line-height:8px;text-align:center;color:#7d8288;font-weight:bold;letter-spacing:0.2px">SCROLL MYSZY</div>
</body></html>
